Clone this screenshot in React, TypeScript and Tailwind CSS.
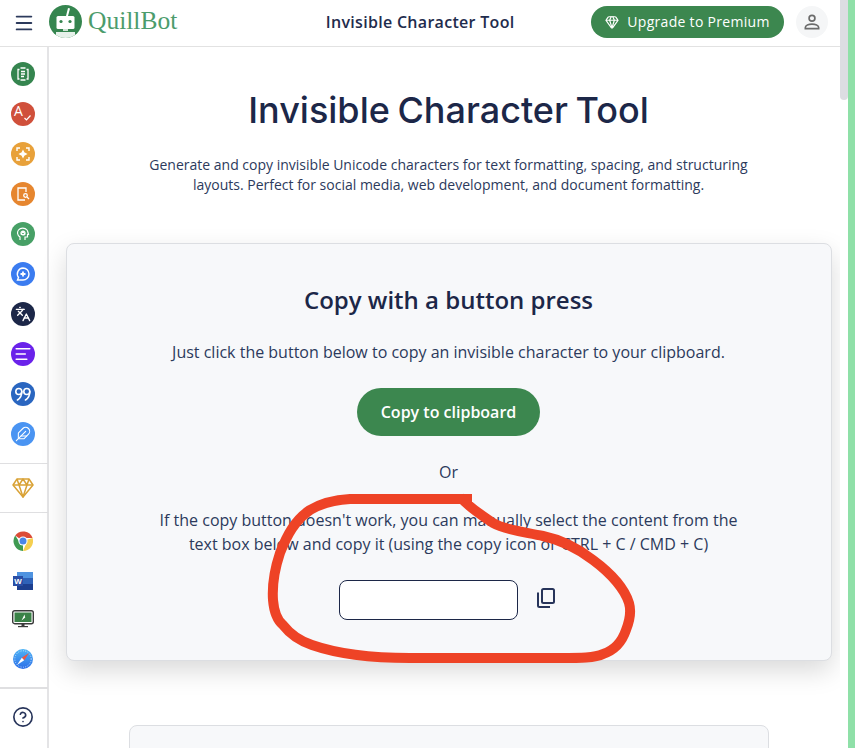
import React from "react";
import { Menu, Languages, AlignLeft, Feather, CircleHelp, Gem } from "lucide-react";

const font = { fontFamily: '"Open Sans", sans-serif' };

function Disc({ bg, children }: { bg: string; children: React.ReactNode }) {
  return (
    <div className="w-6 h-6 rounded-full flex items-center justify-center text-white" style={{ backgroundColor: bg }}>
      {children}
    </div>
  );
}

function Bot() {
  return (
    <svg width="33" height="33" viewBox="0 0 33 33">
      <defs>
        <clipPath id="c"><circle cx="16.5" cy="16.5" r="16.5" /></clipPath>
      </defs>
      <circle cx="16.5" cy="16.5" r="16.5" fill="#35854f" />
      <g clipPath="url(#c)">
        <path d="M17 11 L19 3 L21 3.5 L19 11 Z" fill="#fff" />
        <rect x="7.5" y="11" width="18" height="13" rx="1.5" fill="#fff" />
        <circle cx="12" cy="16.5" r="1.6" fill="#35854f" />
        <circle cx="21" cy="16.5" r="1.6" fill="#35854f" />
        <rect x="14" y="24" width="5" height="2" fill="#cfe3d6" />
        <rect x="7" y="27" width="19" height="8" fill="#e6f1ea" />
      </g>
    </svg>
  );
}

function Chrome() {
  return (
    <svg width="20" height="20" viewBox="0 0 20 20">
      <path d="M10 10 L2.2 4.5 A10 10 0 0 1 19.6 7 L10 7 Z" fill="#dc4c38" />
      <path d="M10 10 L19.6 7 A10 10 0 0 1 10 20 L13 13 Z" fill="#f5cf50" />
      <path d="M10 10 L10 20 A10 10 0 0 1 2.2 4.5 L7 12 Z" fill="#3f9a52" />
      <circle cx="10" cy="10" r="4.6" fill="#fff" />
      <circle cx="10" cy="10" r="3.5" fill="#4a86e8" />
    </svg>
  );
}

function Word() {
  return (
    <svg width="20" height="18" viewBox="0 0 20 18">
      <rect x="4" y="0" width="16" height="6" fill="#4f93e0" />
      <rect x="4" y="6" width="16" height="6" fill="#2f62b8" />
      <rect x="4" y="12" width="16" height="6" fill="#1d3f8f" />
      <rect x="0" y="4" width="10" height="10" fill="#2a4ea5" />
      <text x="5" y="12" textAnchor="middle" fontSize="8" fontWeight="700" fill="#fff" fontFamily="Liberation Sans">W</text>
    </svg>
  );
}

function Monitor() {
  return (
    <svg width="22" height="18" viewBox="0 0 22 18">
      <rect x="0.7" y="0.7" width="20.6" height="13" rx="2" fill="#fff" stroke="#3b3b3b" strokeWidth="1.4" />
      <rect x="2.5" y="2.5" width="17" height="9.5" fill="#3a8247" />
      <path d="M9.5 10.5 L12.5 4.5 L13.2 7.5 Z" fill="#fff" />
      <rect x="9.5" y="14" width="3" height="2" fill="#3b3b3b" />
      <rect x="6" y="16" width="10" height="1.2" fill="#3b3b3b" />
    </svg>
  );
}

function Safari() {
  return (
    <svg width="20" height="20" viewBox="0 0 20 20">
      <defs>
        <linearGradient id="s" x1="0" y1="0" x2="0" y2="1">
          <stop offset="0" stopColor="#4fb4f5" />
          <stop offset="1" stopColor="#2a6ee8" />
        </linearGradient>
      </defs>
      <circle cx="10" cy="10" r="10" fill="url(#s)" />
      <circle cx="10" cy="10" r="8.2" fill="none" stroke="#fff" strokeWidth="1" strokeDasharray="0.8 1.6" opacity="0.8" />
      <path d="M16 4 L8.8 8.8 L11.2 11.2 Z" fill="#f0563f" />
      <path d="M4 16 L8.8 8.8 L11.2 11.2 Z" fill="#fff" />
    </svg>
  );
}

export default function App() {
  return (
    <div className="relative w-[855px] h-[748px] overflow-hidden bg-white flex text-[#1f2c4d]" style={font}>
      <div className="w-[840px] flex flex-col shrink-0">
        {/* Header */}
        <header className="h-[47px] shrink-0 flex items-center border-b border-[#e2e2e2] pl-[13px] pr-[12px]">
          <Menu className="w-[22px] h-[22px] text-[#2c3a5c]" strokeWidth={2} />
          <div className="ml-[14px] -mt-[4px] flex items-center">
            <Bot />
            <span className="ml-[6px] text-[25.5px] leading-none text-[#4c9c6c]" style={{ fontFamily: '"Liberation Serif", serif' }}>QuillBot</span>
          </div>
          <div className="flex-1 text-center text-[16px] font-semibold tracking-[0.3px] pl-[72px] -mt-[2px]">Invisible Character Tool</div>
          <button className="w-[193px] h-[32px] rounded-full bg-[#3c874f] text-white text-[14px] font-medium flex items-center justify-center gap-[8px] -mt-[3px]">
            <Gem className="w-[14px] h-[14px]" strokeWidth={2} />
            <span className="tracking-[0.3px]">Upgrade to Premium</span>
          </button>
          <div className="ml-[12px] -mt-[3px] w-8 h-8 rounded-full bg-[#f5f6f7] flex items-center justify-center">
            <svg width="20" height="20" viewBox="0 0 24 24" fill="none" stroke="#6b6b6b" strokeWidth="2">
              <circle cx="12" cy="7.5" r="3.5" />
              <path d="M4 20 v-1.5 c0-2.5 4-4 8-4 s8 1.5 8 4 V20 Z" />
            </svg>
          </div>
        </header>

        <div className="flex flex-1 min-h-0">
          {/* Sidebar */}
          <aside className="w-[49px] shrink-0 border-r-2 border-[#e4e4e6] flex flex-col items-center pr-[1px]">
            <div className="pt-[15px] pb-[17px] flex flex-col items-center gap-4 w-full">
              <Disc bg="#35854f">
                <svg width="16" height="16" viewBox="0 0 16 16" fill="none" stroke="#fff" strokeWidth="1.3">
                  <path d="M4.5 3.5 H3 V13 H4.5 M11.5 3.5 H13 V13 H11.5" />
                  <path d="M6 5.5 H10 M6 8 H10 M6 10.5 H9" />
                  <path d="M5.5 2 H10.5 M5.5 14 H10.5" />
                </svg>
              </Disc>
              <Disc bg="#d0503b">
                <span className="relative block w-4 h-4">
                  <span className="absolute -left-[1px] -top-[3px] text-[14px] leading-[16px] font-normal">A</span>
                  <svg className="absolute left-[9px] top-[9px]" width="7" height="6" viewBox="0 0 7 6" fill="none" stroke="#fff" strokeWidth="1.2"><path d="M0.5 3 L2.5 5 L6.5 0.5" /></svg>
                </span>
              </Disc>
              <Disc bg="#e8a13a">
                <svg width="16" height="16" viewBox="0 0 16 16" fill="none" stroke="#fff" strokeWidth="1.4">
                  <path d="M2 5 V2 H5 M11 2 H14 V5 M14 11 V14 H11 M5 14 H2 V11" />
                  <path d="M8 5 L9 7 L11 8 L9 9 L8 11 L7 9 L5 8 L7 7 Z" fill="#fff" />
                </svg>
              </Disc>
              <Disc bg="#e6862f">
                <svg width="16" height="16" viewBox="0 0 16 16" fill="none" stroke="#fff" strokeWidth="1.3">
                  <path d="M10 14 H3 V2 H11 V6" />
                  <circle cx="10.5" cy="9.5" r="1.8" />
                  <path d="M12 11 L14 13" />
                </svg>
              </Disc>
              <Disc bg="#47a066">
                <svg width="16" height="16" viewBox="0 0 16 16" fill="none" stroke="#fff" strokeWidth="1.2">
                  <path d="M5 14 V11 C2 9 2 6 3.5 4 C5.5 1.5 10 1.5 12 4 C13 5.5 13 7 13.5 8.5 H12.5 V11 H10 V14" />
                  <circle cx="8" cy="7" r="2" />
                  <path d="M8 5 L6 8.5 M8 5 L10 8.5 M6 8.5 H10" />
                </svg>
              </Disc>
              <Disc bg="#3b7cf0">
                <svg width="16" height="16" viewBox="0 0 16 16" fill="none" stroke="#fff" strokeWidth="1.4">
                  <path d="M8 2 A6 6 0 0 1 14 8 A6 6 0 0 1 8 14 H2.5 L3.5 11.5 A6 6 0 0 1 8 2 Z" />
                  <path d="M8 5.5 V10.5 M5.5 8 H10.5" strokeWidth="1.8" />
                </svg>
              </Disc>
              <Disc bg="#1c2748">
                <Languages className="w-4 h-4" strokeWidth={2} />
              </Disc>
              <Disc bg="#6a22ea">
                <AlignLeft className="w-[18px] h-[18px]" strokeWidth={2.2} />
              </Disc>
              <Disc bg="#2a66c0">
                <svg width="18" height="14" viewBox="0 0 18 14" fill="none" stroke="#fff" strokeWidth="1.6" strokeLinecap="round">
                  <circle cx="4.8" cy="4.5" r="3" />
                  <path d="M7.8 4.5 C7.8 8.5 6 11.5 3.5 13" />
                  <circle cx="12.8" cy="4.5" r="3" />
                  <path d="M15.8 4.5 C15.8 8.5 14 11.5 11.5 13" />
                </svg>
              </Disc>
              <Disc bg="#4a94f2">
                <Feather className="w-4 h-4" strokeWidth={1.6} />
              </Disc>
            </div>
            <div className="w-[49px] -mr-[1px] h-[1px] bg-[#dfdfe1] shrink-0" />
            <div className="h-[48px] flex items-center justify-center">
              <svg width="22" height="20" viewBox="0 0 22 20" fill="none" stroke="#d9a236" strokeWidth="1.5" strokeLinejoin="round">
                <path d="M5 1 H17 L21 7 L11 19 L1 7 Z" />
                <path d="M1 7 H21 M7 7 L11 19 L15 7 M5 1 L7 7 L11 1 L15 7 L17 1" />
              </svg>
            </div>
            <div className="w-[49px] -mr-[1px] h-[1px] bg-[#dfdfe1] shrink-0" />
            <div className="w-full flex flex-col items-center pt-[18px] pb-[18px]">
              <div className="h-5 flex items-center"><Chrome /></div>
              <div className="h-[20px] mt-[20px] flex items-center"><Word /></div>
              <div className="h-[18px] mt-[19px] flex items-center"><Monitor /></div>
              <div className="h-5 mt-[21px] flex items-center"><Safari /></div>
            </div>
            <div className="w-[49px] -mr-[1px] h-[2px] bg-[#dfdfe1] shrink-0" />
            <div className="pt-[17px]">
              <CircleHelp className="w-[22px] h-[22px] text-[#27345a]" strokeWidth={1.8} />
            </div>
          </aside>

          {/* Main */}
          <main className="flex-1 min-w-0 flex flex-col items-center">
            <h1 className="mt-[38px] text-[36px] leading-[50px] font-medium [word-spacing:-2px] text-[#1c2748] ml-[8px]" style={{ fontFamily: 'Inter, sans-serif' }}>
              Invisible Character Tool
            </h1>
            <p className="mt-[20px] text-[14px] leading-[20px] text-center text-[#2c3a5c] w-[620px] ml-[8px]">
              Generate and copy invisible Unicode characters for text formatting, spacing, and structuring layouts. Perfect for social media, web development, and document formatting.
            </p>
            <section className="mt-[48px] ml-[8px] w-[766px] h-[418px] shrink-0 rounded-lg bg-[#f7f8fa] border border-[#dcdee2] shadow-[0_10px_26px_rgba(0,0,0,0.15)] flex flex-col items-center">
              <h2 className="mt-[38px] text-[24px] leading-[36px] font-semibold text-[#1c2748]">Copy with a button press</h2>
              <p className="mt-[22px] text-[16px] leading-[24px] text-[#2c3a5c]">
                Just click the button below to copy an invisible character to your clipboard.
              </p>
              <button className="mt-[24px] w-[183px] h-[48px] rounded-full bg-[#3c874f] text-white text-[16px] font-semibold">Copy to clipboard</button>
              <div className="mt-[24px] text-[16px] leading-[24px] text-[#2c3a5c]">Or</div>
              <p className="mt-[24px] w-[600px] text-center text-[16px] leading-[24px] text-[#2c3a5c]">
                If the copy button doesn't work, you can manually select the content from the text box below and copy it (using the copy icon or CTRL + C / CMD + C)
              </p>
              <div className="mt-[24px] flex items-start -ml-[4px]">
                <input readOnly className="w-[179px] h-[40px] rounded-lg bg-white border border-[#1c2748]" />
                <svg className="ml-[19px] mt-[8px]" width="18" height="20" viewBox="0 0 18 20" fill="none" stroke="#27345a" strokeWidth="2" strokeLinejoin="round">
                  <rect x="5" y="1" width="12" height="14" rx="1.5" />
                  <path d="M1 4.5 V17.5 A1.5 1.5 0 0 0 2.5 19 H13" />
                </svg>
              </div>
            </section>
            <section className="mt-[64px] ml-[8px] w-[640px] h-[100px] shrink-0 rounded-lg bg-[#f7f8fa] border border-[#dcdee2]" />
          </main>
        </div>
      </div>

      {/* Scrollbar + window edge */}
      <div className="w-[8px] shrink-0 bg-white">
        <div className="h-[100px] rounded-b-md bg-[#dcdde2]" />
      </div>
      <div className="w-[7px] shrink-0 bg-[#8fe0a8]" />

      {/* Hand-drawn annotation */}
      <svg className="absolute inset-0 pointer-events-none" width="855" height="748" viewBox="0 0 855 748" fill="none">
        <path
          d="M472 499 L350 499 C333 500 320 504 310 510 C295 520 287 535 280 553 C275 568 272 585 273 600 C274 612 277 620 283 625 C290 634 300 641 312 645 C335 653 370 658 410 658 L560 658 C580 658 595 658 603 654 C615 650 622 642 626 630 C630 620 631 610 629 603 C625 590 612 574 593 560 C580 550 562 540 543 536 C525 532 505 530 493 523 C480 514 470 508 460 497"
          stroke="#ee4326"
          strokeWidth="10"
          strokeLinejoin="round"
        />
      </svg>
    </div>
  );
}
